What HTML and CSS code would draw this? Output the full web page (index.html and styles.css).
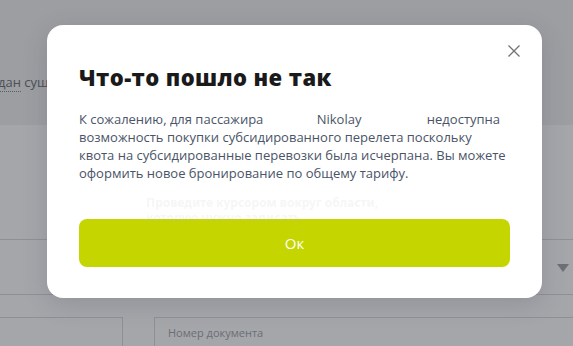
FILE: index.html
```html
<!DOCTYPE html>
<html lang="ru">
<head>
<meta charset="utf-8">
<link rel="stylesheet" href="styles.css">
</head>
<body>
<div class="page">
  <div class="top">
    <span class="crumb"><span class="dotted">дан</span> сущ</span>
  </div>
  <div class="bottom">
    <div class="row row-a"></div>
    <div class="row row-b"><span class="caret"></span></div>
    <div class="inputs">
      <div class="input input-left"></div>
      <div class="input input-right">Номер документа</div>
    </div>
  </div>
</div>

<div class="modal">
  <button class="close" aria-label="Закрыть">
    <svg width="14" height="14" viewBox="0 0 14 14"><path d="M1.5 1.5 L12.5 12.5 M12.5 1.5 L1.5 12.5" stroke="#6f7277" stroke-width="1.3" fill="none"/></svg>
  </button>
  <h1 class="title">Что-то пошло не так</h1>
  <p class="text">К сожалению, для пассажира <span class="name">Nikolay</span> <span class="after">недоступна</span> возможность покупки субсидированного перелета поскольку квота на субсидированные перевозки была исчерпана. Вы можете оформить новое бронирование по общему тарифу.</p>
  <button class="ok">Ок</button>
</div>

<div class="ghost">
  <div class="ghost-text">Проведите курсором вокруг области,<br>которую нужно записать.</div>
</div>
</body>
</html>
```

FILE: styles.css
```css
html, body {
  margin: 0;
  padding: 0;
}
body {
  width: 573px;
  height: 346px;
  overflow: hidden;
  position: relative;
  font-family: "Open Sans", "Noto Sans", sans-serif;
  background: #a4a6aa;
}
.page {
  display: flex;
  flex-direction: column;
  height: 346px;
}
.top {
  flex-shrink: 0;
  height: 125px;
  background: #9c9ea2;
  box-sizing: border-box;
  padding-top: 73px;
}
.crumb {
  display: block;
  margin-left: -2px;
  font-size: 13px;
  color: #4c4f56;
  line-height: 18px;
  white-space: nowrap;
}
.dotted {
  border-bottom: 1px dotted #5a5d63;
}
.bottom {
  flex-shrink: 0;
  display: flex;
  flex-direction: column;
  padding-top: 114px;
}
.row {
  border-top: 1px solid #8e9095;
  box-sizing: border-box;
}
.row-a {
  height: 55px;
}
.row-b {
  height: 23px;
}
.caret {
  position: absolute;
  right: 4px;
  top: 264px;
  width: 0;
  height: 0;
  border-left: 6px solid transparent;
  border-right: 6px solid transparent;
  border-top: 8px solid #6d7075;
}
.inputs {
  display: flex;
  gap: 31px;
}
.input {
  height: 40px;
  border: 1px solid #8e9095;
  box-sizing: border-box;
}
.input-left {
  width: 124px;
  margin-left: -1px;
}
.input-right {
  flex: 1;
  margin-right: -1px;
  font-size: 11px;
  color: #6b6e74;
  padding: 7px 0 0 13px;
}
.modal {
  position: absolute;
  left: 47px;
  top: 25px;
  width: 495px;
  height: 273px;
  box-sizing: border-box;
  background: #fff;
  border-radius: 16px;
  box-shadow: 0 6px 24px rgba(60, 62, 70, 0.18);
  padding: 39px 32px 0 32px;
}
.close {
  position: absolute;
  top: 18px;
  right: 20px;
  width: 16px;
  height: 16px;
  padding: 0;
  border: 0;
  background: none;
  display: flex;
  align-items: center;
  justify-content: center;
}
.title {
  margin: 0;
  font-size: 22px;
  font-weight: 800;
  color: #1a1a1a;
  line-height: 26px;
  letter-spacing: 0.4px;
}
.text {
  margin: 20px 0 0 0;
  font-size: 13px;
  line-height: 18px;
  color: #4a5468;
}
.name {
  margin-left: 50px;
}
.after {
  margin-left: 62px;
}
.ok {
  display: block;
  margin-top: 37px;
  width: 100%;
  height: 48px;
  border: 0;
  border-radius: 8px;
  background: #c5d500;
  color: #fff;
  font-family: "Open Sans", "Noto Sans", sans-serif;
  font-size: 15px;
}
.ghost {
  position: absolute;
  left: 146px;
  top: 195px;
  pointer-events: none;
}
.ghost-text {
  font-family: "Noto Sans", sans-serif;
  font-weight: 700;
  font-size: 12px;
  line-height: 15px;
  color: rgba(190, 190, 190, 0.15);
}
```
